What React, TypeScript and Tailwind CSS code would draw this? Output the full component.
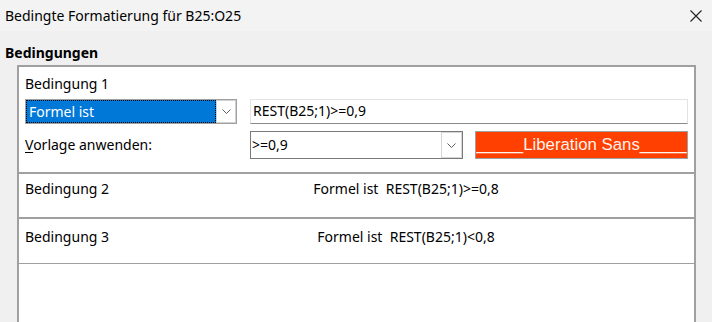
import React from "react";

function Chevron() {
  return (
    <svg width="9" height="5" viewBox="0 0 9 5" className="block">
      <path d="M0.5 0.5 L4.5 4.5 L8.5 0.5" fill="none" stroke="#606060" strokeWidth="1" />
    </svg>
  );
}

export default function App() {
  return (
    <div
      className="w-[712px] h-[322px] overflow-hidden bg-[#f0f0f0] text-black"
      style={{ fontFamily: '"Noto Sans", "Open Sans", sans-serif' }}
    >
      {/* title bar */}
      <div className="h-[31px] bg-[#f3f3f3] flex items-center justify-between pl-[5px] pr-[10px]">
        <span className="text-[14px] leading-none">Bedingte Formatierung für B25:O25</span>
        <svg width="12" height="12" viewBox="0 0 12 12" className="block">
          <path d="M0.5 0.5 L11.5 11.5 M11.5 0.5 L0.5 11.5" stroke="#222" strokeWidth="1.1" fill="none" />
        </svg>
      </div>

      <div className="pl-[5px] pt-[9px] h-[34px]">
        <span className="text-[14px] font-bold leading-[18px]">Bedingungen</span>
      </div>

      <div className="ml-[17px] w-[679px] h-[300px] border-2 border-b-0 border-[#a0a0a0] bg-white text-[14px]">
        {/* Condition 1 */}
        <div className="h-[107px] border-b-2 border-[#a0a0a0] pl-[6px] pt-[7px]">
          <div className="h-[20px] leading-[20px]">Bedingung 1</div>
          <div className="mt-[5px] flex items-center gap-[13px]">
            <div className="w-[212px] h-[25px] border border-[#a0a0a0] flex">
              <div className="flex-1 bg-[#0078d7] border border-dotted border-black text-white leading-[22px] pl-[2px]">
                Formel ist
              </div>
              <div className="w-[20px] bg-white border border-[#d0d0d0] flex items-center justify-center">
                <Chevron />
              </div>
            </div>
            <div className="w-[438px] h-[25px] border border-[#e3e3e3] border-b-[#8a8a8a] leading-[22px] pl-[2px]">
              REST(B25;1)&gt;=0,9
            </div>
          </div>
          <div className="mt-[7px] flex items-center">
            <div className="w-[225px] leading-[20px]">
              <span className="underline underline-offset-2">V</span>orlage anwenden:
            </div>
            <div className="w-[213px] h-[28px] border border-[#7a7a7a] flex">
              <div className="flex-1 leading-[26px] pl-[1px]">&gt;=0,9</div>
              <div className="w-[21px] border border-[#d6d6d6] flex items-center justify-center">
                <Chevron />
              </div>
            </div>
            <div
              className="ml-[12px] w-[213px] h-[28px] border border-[#a0a0a0] bg-[#ff4000] text-[#fff2ec] flex items-center justify-center whitespace-nowrap text-[16.8px]"
              style={{ fontFamily: '"Liberation Sans", Arial, sans-serif' }}
            >
              _____Liberation Sans_____
            </div>
          </div>
        </div>

        {/* Condition 2 */}
        <div className="h-[45px] border-b-2 border-[#a0a0a0] pl-[6px] pt-[5px] flex">
          <div className="w-[93px] leading-[20px]">Bedingung 2</div>
          <div className="flex-1 text-center leading-[20px]">Formel ist&nbsp;&nbsp;REST(B25;1)&gt;=0,8</div>
        </div>

        {/* Condition 3 */}
        <div className="h-[45px] border-b border-[#a0a0a0] pl-[6px] pt-[8px] flex">
          <div className="w-[93px] leading-[20px]">Bedingung 3</div>
          <div className="flex-1 text-center leading-[20px]">Formel ist&nbsp;&nbsp;REST(B25;1)&lt;0,8</div>
        </div>
      </div>
    </div>
  );
}
